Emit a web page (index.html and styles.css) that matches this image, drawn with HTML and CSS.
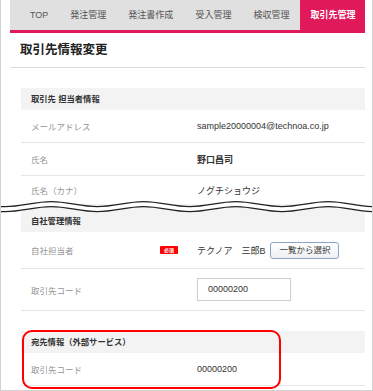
FILE: index.html
```html
<!DOCTYPE html>
<html lang="ja">
<head>
<meta charset="utf-8">
<link rel="stylesheet" href="styles.css">
</head>
<body>
<div class="frame">
  <div class="main">
    <nav class="tabs">
      <span class="tab">TOP</span>
      <span class="tab">発注管理</span>
      <span class="tab">発注書作成</span>
      <span class="tab">受入管理</span>
      <span class="tab">検収管理</span>
      <span class="tab active">取引先管理</span>
    </nav>
    <h1 class="title">取引先情報変更</h1>

    <section class="sec sec1">
      <div class="sec-head">取引先 担当者情報</div>
      <div class="row"><span class="label">メールアドレス</span><span class="value">sample20000004@technoa.co.jp</span></div>
      <div class="row"><span class="label">氏名</span><span class="value strong">野口昌司</span></div>
      <div class="row row-cut"><span class="label">氏名（カナ）</span><span class="value">ノグチショウジ</span></div>
    </section>

    <section class="sec sec2">
      <div class="sec-head head-wave">自社管理情報</div>
      <div class="row row-tall"><span class="label">自社担当者<span class="badge">必須</span></span><span class="value">テクノア　三郎B<span class="btn">一覧から選択</span></span></div>
      <div class="row row-input"><span class="label">取引先コード</span><span class="value"><span class="input">00000200</span></span></div>
    </section>

    <section class="sec sec3">
      <div class="sec-head">宛先情報（外部サービス）</div>
      <div class="row"><span class="label">取引先コード</span><span class="value">00000200</span></div>
    </section>
  </div>

  <svg class="wave" width="373" height="20" viewBox="0 0 373 20">
    <path d="M-42.05,9.2 C-25.25,9.2 -12.7,14.2 4.1,14.2 S33.45,9.2 50.25,9.2 S79.6,14.2 96.4,14.2 S125.75,9.2 142.55,9.2 S171.9,14.2 188.7,14.2 S218.05,9.2 234.85,9.2 S264.2,14.2 281,14.2 S310.35,9.2 327.15,9.2 S356.5,14.2 373.3,14.2 S402.65,9.2 419.45,9.2" fill="none" stroke="#fff" stroke-width="5"/>
    <path d="M-42.05,6.7 C-25.25,6.7 -12.7,11.7 4.1,11.7 S33.45,6.7 50.25,6.7 S79.6,11.7 96.4,11.7 S125.75,6.7 142.55,6.7 S171.9,11.7 188.7,11.7 S218.05,6.7 234.85,6.7 S264.2,11.7 281,11.7 S310.35,6.7 327.15,6.7 S356.5,11.7 373.3,11.7 S402.65,6.7 419.45,6.7" fill="none" stroke="#222" stroke-width="1.3"/>
    <path d="M-42.05,11.7 C-25.25,11.7 -12.7,16.7 4.1,16.7 S33.45,11.7 50.25,11.7 S79.6,16.7 96.4,16.7 S125.75,11.7 142.55,11.7 S171.9,16.7 188.7,16.7 S218.05,11.7 234.85,11.7 S264.2,16.7 281,16.7 S310.35,11.7 327.15,11.7 S356.5,16.7 373.3,16.7 S402.65,11.7 419.45,11.7" fill="none" stroke="#222" stroke-width="1.3"/>
  </svg>

  <div class="highlight"></div>
</div>
</body>
</html>
```

FILE: styles.css
```css
body {
  margin: 0;
  background: #fff;
  font-family: "Liberation Sans", "Noto Sans CJK JP", sans-serif;
}

.frame {
  position: relative;
  width: 373px;
  height: 391px;
  box-sizing: border-box;
  border-left: 1px solid #d2d2d2;
  border-right: 1px solid #d2d2d2;
  border-bottom: 1px solid #d2d2d2;
  padding-left: 9px;
  overflow: hidden;
  background: #fff;
}

.main {
  width: 355px;
}

.tabs {
  display: flex;
  height: 30px;
  background: #e0e0e0;
  border-bottom: 3px solid #e0195a;
  padding-left: 9px;
}

.tab {
  padding: 0 11px;
  line-height: 30px;
  font-size: 9px;
  color: #555;
  white-space: nowrap;
}

.tab.active {
  background: #e0195a;
  color: #fff;
  font-weight: bold;
  padding: 0 10px;
}

.title {
  margin: 0;
  height: 34px;
  line-height: 34px;
  padding-left: 10px;
  font-size: 12.5px;
  font-weight: bold;
  color: #222;
  border-bottom: 1px solid #dcdcdc;
}

.sec {
  margin-left: 11px;
}

.sec1 {
  margin-top: 20px;
}

.sec3 {
  margin-top: 20px;
}

.sec-head {
  height: 22px;
  line-height: 22px;
  background: #f3f3f3;
  padding-left: 10px;
  font-size: 8.3px;
  font-weight: bold;
  color: #333;
}

.head-wave {
  padding-top: 6px;
}

.row {
  display: grid;
  grid-template-columns: 176px 1fr;
  align-items: center;
  height: 32px;
  border-bottom: 1px solid #e6e6e6;
  font-size: 8.5px;
}

.row-cut {
  height: 28px;
  align-items: start;
  line-height: 30px;
  border-bottom: none;
  overflow: hidden;
}

.row-tall {
  height: 36px;
}

.row-input {
  height: 41px;
}

.label {
  display: flex;
  justify-content: space-between;
  align-items: center;
  padding-left: 10px;
  padding-right: 19px;
  color: #959595;
}

.value {
  display: flex;
  align-items: center;
  color: #333;
  font-size: 9px;
}

.value.strong {
  font-weight: bold;
  color: #333;
}

.badge {
  display: inline-block;
  width: 18px;
  height: 8px;
  line-height: 8px;
  text-align: center;
  background: #f00;
  color: #fff;
  font-size: 5px;
  font-weight: bold;
  border-radius: 1px;
}

.btn {
  display: inline-block;
  margin-left: 5px;
  height: 17px;
  box-sizing: border-box;
  line-height: 15px;
  padding: 0 8px;
  border: 1px solid #8ea3c9;
  border-radius: 3px;
  background: linear-gradient(#ffffff, #eef0f4);
  font-size: 8.5px;
  color: #333;
}

.input {
  display: inline-block;
  width: 94px;
  height: 23px;
  box-sizing: border-box;
  border: 1px solid #cfcfcf;
  padding-left: 10px;
  line-height: 21px;
  font-size: 9px;
  color: #333;
}

.wave {
  position: absolute;
  top: 195px;
  left: 0;
  display: block;
}

.highlight {
  position: absolute;
  left: 21px;
  top: 330px;
  width: 259px;
  height: 59px;
  box-sizing: border-box;
  border: 2.5px solid #f00;
  border-radius: 10px;
}
```
